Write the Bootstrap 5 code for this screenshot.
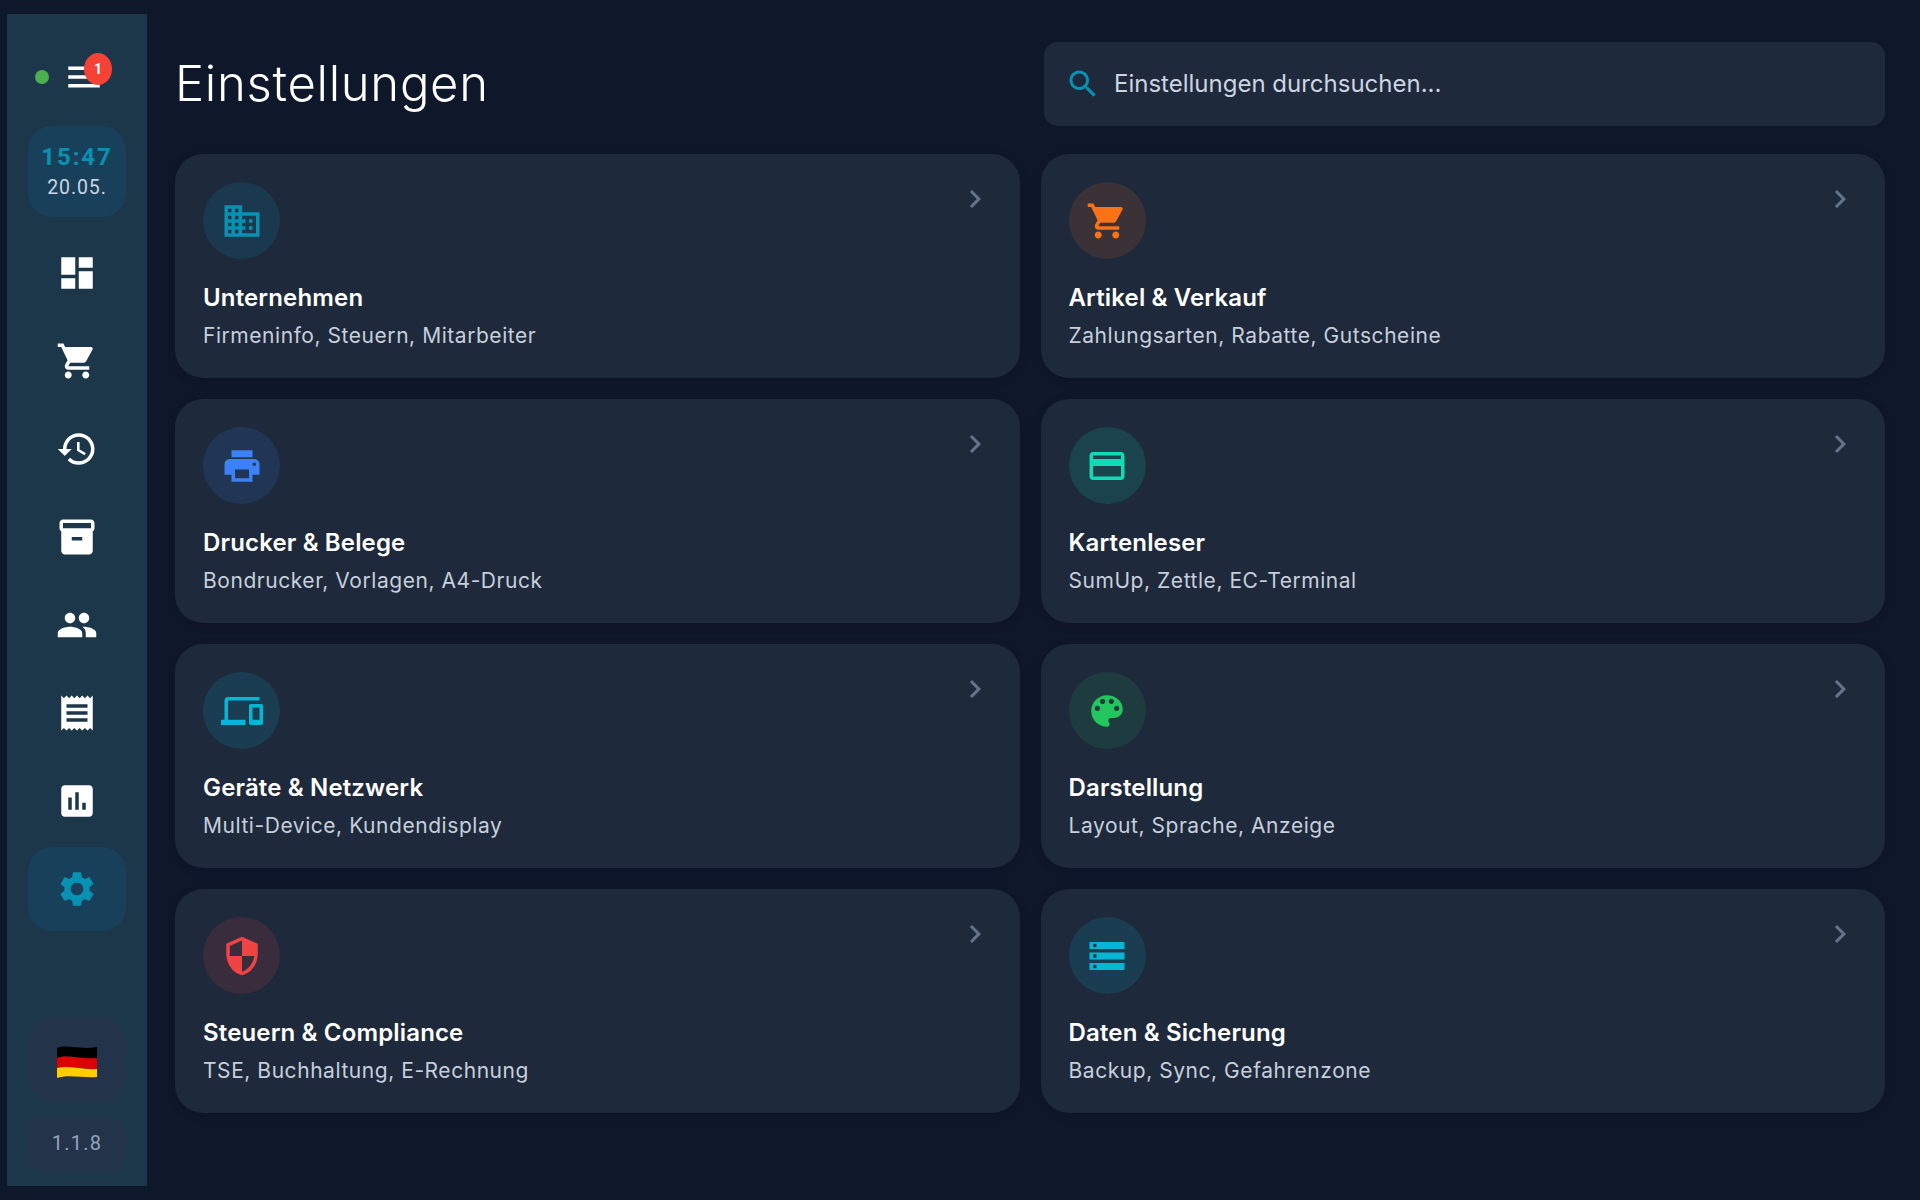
<!DOCTYPE html>
<html lang="de">
<head>
<meta charset="UTF-8">
<meta name="viewport" content="width=device-width, initial-scale=1.0">
<title>Einstellungen</title>
<link href="https://cdn.jsdelivr.net/npm/bootstrap@5.3.0/dist/css/bootstrap.min.css" rel="stylesheet">
<style>
    html, body { height: 100%; }
    body { background: #0f172a; color: #fff; font-family: Inter, "Noto Sans", sans-serif; overflow: hidden; }
    svg { fill: currentColor; display: block; flex-shrink: 0; }

    /* sidebar */
    .side-rail { width: 140px; margin: 14px 0 14px 7px; background: #1c364a; padding: 42px 21px 14px; }
    .side-top { height: 42px; margin-bottom: 28px; gap: 14px; padding-left: 7px; }
    .status-dot { width: 14px; height: 14px; background: #4caf50; }
    .menu-btn { width: 42px; height: 42px; }
    .menu-count { top: -3px; left: 21px; width: 28px; height: 32px; border-radius: 50%; background: #f44336; font: 700 14px/32px Roboto, sans-serif; text-align: center; }
    .clock-box { height: 91px; background: #19405a; border-radius: 24px; font-family: Roboto, sans-serif; margin-bottom: 14px; }
    .clock-time { color: #0891b2; font-size: 24px; font-weight: 700; letter-spacing: 1.9px; line-height: 30px; margin-top: -1px; }
    .clock-date { color: #cbd5e1; font-size: 19.5px; letter-spacing: .9px; line-height: 26px; margin-top: 3px; }
    .rail-item { height: 84px; margin-bottom: 4px; border-radius: 24px; color: #fff; }
    .rail-item.is-active { background: #19405a; color: #0891b2; }
    .flag-box { height: 84px; background: #23344a; border-radius: 24px; margin-bottom: 14px; padding-top: 4px; }
    .version-box { height: 56px; background: #23344a; border-radius: 18px; color: #94a3b8; font: 400 20px/1 Roboto, sans-serif; letter-spacing: 1.2px; padding-bottom: 2px; }

    /* main */
    .main-pane { padding: 42px 35px 0 28px; }
    .page-head { height: 84px; margin-bottom: 28px; }
    .page-title { font-size: 49px; font-weight: 300; letter-spacing: .7px; margin: 0; }
    .search-field { width: 841px; height: 84px; background: #1e293b; border-radius: 14px; padding-left: 21px; gap: 13px; color: #0891b2; }
    .search-text { color: #cbd5e1; font-size: 24px; }
    .settings-grid { display: grid; grid-template-columns: 1fr 1fr; grid-auto-rows: 224px; gap: 21px; }
    .setting-tile { background: #1e293b; border: 0; border-radius: 28px; padding: 28px 28px 0; box-shadow: 0 2px 8px rgba(0,0,0,.15); color: #fff; }
    .tile-chev { top: 27px; right: 27px; color: #64748b; }
    .tile-icon { width: 77px; height: 77px; margin-bottom: 21px; }
    .tile-title { font-size: 24px; font-weight: 600; letter-spacing: .15px; line-height: 36px; margin: 0; }
    .tile-sub { color: #c6cfdb; font-size: 21px; letter-spacing: .55px; line-height: 30px; margin-top: 5px; }

    .tone-cyan { color: #0891b2; background: rgba(8,145,178,.16); }
    .tone-orange { color: #f97316; background: rgba(249,115,22,.13); }
    .tone-blue { color: #3b82f6; background: rgba(59,130,246,.14); }
    .tone-teal { color: #10dbb4; background: rgba(16,219,180,.15); }
    .tone-sky { color: #06b6d4; background: rgba(6,182,212,.15); }
    .tone-green { color: #22c55e; background: rgba(34,197,94,.13); }
    .tone-red { color: #ef4444; background: rgba(239,68,68,.13); }
</style>
</head>
<body class="d-flex">

<!-- Sidebar -->
<aside class="side-rail d-flex flex-column flex-shrink-0">
    <div class="side-top d-flex align-items-center">
        <span class="status-dot rounded-circle"></span>
        <div class="menu-btn position-relative">
            <svg width="42" height="42" viewBox="0 0 24 24"><path d="M3 18h18v-2H3v2zm0-5h18v-2H3v2zm0-7v2h18V6H3z"/></svg>
            <span class="menu-count position-absolute">1</span>
        </div>
    </div>
    <div class="clock-box d-flex flex-column align-items-center justify-content-center">
        <div class="clock-time">15:47</div>
        <div class="clock-date">20.05.</div>
    </div>
    <div class="rail-item d-flex align-items-center justify-content-center"><svg width="42" height="42" viewBox="0 0 24 24"><path d="M3 13h8V3H3v10zm0 8h8v-6H3v6zm10 0h8V11h-8v10zm0-18v6h8V3h-8z"/></svg></div>
    <div class="rail-item d-flex align-items-center justify-content-center"><svg width="42" height="42" viewBox="0 0 24 24"><path d="M7 18c-1.1 0-1.99.9-1.99 2S5.9 22 7 22s2-.9 2-2-.9-2-2-2zM1 2v2h2l3.6 7.59-1.35 2.45c-.16.28-.25.61-.25.96 0 1.1.9 2 2 2h12v-2H7.42c-.14 0-.25-.11-.25-.25l.03-.12.9-1.63h7.45c.75 0 1.41-.41 1.75-1.03l3.58-6.49c.08-.14.12-.31.12-.48 0-.55-.45-1-1-1H5.21l-.94-2H1zm16 16c-1.1 0-1.99.9-1.99 2s.89 2 1.99 2 2-.9 2-2-.9-2-2-2z"/></svg></div>
    <div class="rail-item d-flex align-items-center justify-content-center"><svg width="42" height="42" viewBox="0 0 24 24"><path d="M13 3c-4.97 0-9 4.03-9 9H1l3.89 3.89.07.14L9 12H6c0-3.87 3.13-7 7-7s7 3.13 7 7-3.13 7-7 7c-1.93 0-3.68-.79-4.94-2.06l-1.42 1.42C8.27 19.99 10.51 21 13 21c4.97 0 9-4.03 9-9s-4.03-9-9-9zm-1 5v5l4.28 2.54.72-1.21-3.5-2.08V8H12z"/></svg></div>
    <div class="rail-item d-flex align-items-center justify-content-center"><svg width="42" height="42" viewBox="0 0 24 24"><path d="M20 2H4c-1 0-2 .9-2 2v3.01c0 .72.43 1.34 1 1.69V20c0 1.1 1.1 2 2 2h14c.9 0 2-.9 2-2V8.7c.57-.35 1-.97 1-1.69V4c0-1.1-1-2-2-2zm-5 12H9v-2h6v2zm5-7H4V4h16v3z"/></svg></div>
    <div class="rail-item d-flex align-items-center justify-content-center"><svg width="42" height="42" viewBox="0 0 24 24"><path d="M16 11c1.66 0 2.99-1.34 2.99-3S17.66 5 16 5c-1.66 0-3 1.34-3 3s1.34 3 3 3zm-8 0c1.66 0 2.99-1.34 2.99-3S9.66 5 8 5C6.34 5 5 6.34 5 8s1.34 3 3 3zm0 2c-2.33 0-7 1.17-7 3.5V19h14v-2.5c0-2.33-4.67-3.5-7-3.5zm8 0c-.29 0-.62.02-.97.05 1.16.84 1.97 1.97 1.97 3.45V19h6v-2.5c0-2.33-4.67-3.5-7-3.5z"/></svg></div>
    <div class="rail-item d-flex align-items-center justify-content-center"><svg width="42" height="42" viewBox="0 0 24 24"><path d="M18 17H6v-2h12v2zm0-4H6v-2h12v2zm0-4H6V7h12v2zM3 22l1.5-1.5L6 22l1.5-1.5L9 22l1.5-1.5L12 22l1.5-1.5L15 22l1.5-1.5L18 22l1.5-1.5L21 22V2l-1.5 1.5L18 2l-1.5 1.5L15 2l-1.5 1.5L12 2l-1.5 1.5L9 2 7.5 3.5 6 2 4.5 3.5 3 2v20z"/></svg></div>
    <div class="rail-item d-flex align-items-center justify-content-center"><svg width="42" height="42" viewBox="0 0 24 24"><path d="M19 3H5c-1.1 0-2 .9-2 2v14c0 1.1.9 2 2 2h14c1.1 0 2-.9 2-2V5c0-1.1-.9-2-2-2zM9 17H7v-7h2v7zm4 0h-2V7h2v10zm4 0h-2v-4h2v4z"/></svg></div>
    <div class="rail-item is-active d-flex align-items-center justify-content-center"><svg width="42" height="42" viewBox="0 0 24 24"><path d="M19.14 12.94c.04-.3.06-.61.06-.94 0-.32-.02-.64-.07-.94l2.03-1.58c.18-.14.23-.41.12-.61l-1.92-3.32c-.12-.22-.37-.29-.59-.22l-2.39.96c-.5-.38-1.03-.7-1.62-.94l-.36-2.54c-.04-.24-.24-.41-.48-.41h-3.84c-.24 0-.43.17-.47.41l-.36 2.54c-.59.24-1.13.57-1.62.94l-2.39-.96c-.22-.08-.47 0-.59.22L2.74 8.87c-.12.21-.08.47.12.61l2.03 1.58c-.05.3-.09.63-.09.94s.02.64.07.94l-2.03 1.58c-.18.14-.23.41-.12.61l1.92 3.32c.12.22.37.29.59.22l2.39-.96c.5.38 1.03.7 1.62.94l.36 2.54c.05.24.24.41.48.41h3.84c.24 0 .44-.17.47-.41l.36-2.54c.59-.24 1.13-.56 1.62-.94l2.39.96c.22.08.47 0 .59-.22l1.92-3.32c.12-.22.07-.47-.12-.61l-2.01-1.58zM12 15.6c-1.98 0-3.6-1.62-3.6-3.6s1.62-3.6 3.6-3.6 3.6 1.62 3.6 3.6-1.62 3.6-3.6 3.6z"/></svg></div>
    <div class="flag-box mt-auto d-flex align-items-center justify-content-center">
        <svg width="42" height="34" viewBox="0 0 42 34">
            <path fill="#000" d="M1 3C10-1 24 5 41 2v11C26 15 12 9 1 13z"/>
            <path fill="#dd0000" d="M1 13C12 9 26 15 41 13v11C26 25 12 20 1 23z"/>
            <path fill="#ffce00" d="M1 23C12 20 26 25 41 24v8C26 33 12 29 1 33z"/>
        </svg>
    </div>
    <div class="version-box d-flex align-items-center justify-content-center">1.1.8</div>
</aside>

<!-- Main -->
<main class="main-pane flex-grow-1">
    <div class="page-head d-flex align-items-center justify-content-between">
        <h1 class="page-title">Einstellungen</h1>
        <div class="search-field d-flex align-items-center">
            <svg width="36" height="36" viewBox="0 0 24 24"><path d="M15.5 14h-.79l-.28-.27C15.41 12.59 16 11.11 16 9.5 16 5.91 13.09 3 9.5 3S3 5.91 3 9.5 5.91 16 9.5 16c1.61 0 3.09-.59 4.23-1.57l.27.28v.79l5 4.99L20.49 19l-4.99-5zm-6 0C7.01 14 5 11.99 5 9.5S7.01 5 9.5 5 14 7.01 14 9.5 11.99 14 9.5 14z"/></svg>
            <span class="search-text">Einstellungen durchsuchen...</span>
        </div>
    </div>

    <div class="settings-grid">
        <div class="card setting-tile position-relative">
            <svg class="tile-chev position-absolute" width="36" height="36" viewBox="0 0 24 24"><path d="M10 6L8.59 7.41 13.17 12l-4.58 4.59L10 18l6-6z"/></svg>
            <div class="tile-icon tone-cyan rounded-circle d-flex align-items-center justify-content-center"><svg width="42" height="42" viewBox="0 0 24 24"><path d="M12 7V3H2v18h20V7H12zM6 19H4v-2h2v2zm0-4H4v-2h2v2zm0-4H4V9h2v2zm0-4H4V5h2v2zm4 12H8v-2h2v2zm0-4H8v-2h2v2zm0-4H8V9h2v2zm0-4H8V5h2v2zm10 12h-8v-2h2v-2h-2v-2h2v-2h-2V9h8v10zm-2-8h-2v2h2v-2zm0 4h-2v2h2v-2z"/></svg></div>
            <h2 class="tile-title">Unternehmen</h2>
            <div class="tile-sub">Firmeninfo, Steuern, Mitarbeiter</div>
        </div>
        <div class="card setting-tile position-relative">
            <svg class="tile-chev position-absolute" width="36" height="36" viewBox="0 0 24 24"><path d="M10 6L8.59 7.41 13.17 12l-4.58 4.59L10 18l6-6z"/></svg>
            <div class="tile-icon tone-orange rounded-circle d-flex align-items-center justify-content-center"><svg width="42" height="42" viewBox="0 0 24 24"><path d="M7 18c-1.1 0-1.99.9-1.99 2S5.9 22 7 22s2-.9 2-2-.9-2-2-2zM1 2v2h2l3.6 7.59-1.35 2.45c-.16.28-.25.61-.25.96 0 1.1.9 2 2 2h12v-2H7.42c-.14 0-.25-.11-.25-.25l.03-.12.9-1.63h7.45c.75 0 1.41-.41 1.75-1.03l3.58-6.49c.08-.14.12-.31.12-.48 0-.55-.45-1-1-1H5.21l-.94-2H1zm16 16c-1.1 0-1.99.9-1.99 2s.89 2 1.99 2 2-.9 2-2-.9-2-2-2z"/></svg></div>
            <h2 class="tile-title">Artikel &amp; Verkauf</h2>
            <div class="tile-sub">Zahlungsarten, Rabatte, Gutscheine</div>
        </div>
        <div class="card setting-tile position-relative">
            <svg class="tile-chev position-absolute" width="36" height="36" viewBox="0 0 24 24"><path d="M10 6L8.59 7.41 13.17 12l-4.58 4.59L10 18l6-6z"/></svg>
            <div class="tile-icon tone-blue rounded-circle d-flex align-items-center justify-content-center"><svg width="42" height="42" viewBox="0 0 24 24"><path d="M19 8H5c-1.66 0-3 1.34-3 3v6h4v4h12v-4h4v-6c0-1.66-1.34-3-3-3zm-3 11H8v-5h8v5zm3-7c-.55 0-1-.45-1-1s.45-1 1-1 1 .45 1 1-.45 1-1 1zm-1-9H6v4h12V3z"/></svg></div>
            <h2 class="tile-title">Drucker &amp; Belege</h2>
            <div class="tile-sub">Bondrucker, Vorlagen, A4-Druck</div>
        </div>
        <div class="card setting-tile position-relative">
            <svg class="tile-chev position-absolute" width="36" height="36" viewBox="0 0 24 24"><path d="M10 6L8.59 7.41 13.17 12l-4.58 4.59L10 18l6-6z"/></svg>
            <div class="tile-icon tone-teal rounded-circle d-flex align-items-center justify-content-center"><svg width="42" height="42" viewBox="0 0 24 24"><path d="M20 4H4c-1.11 0-1.99.89-1.99 2L2 18c0 1.11.89 2 2 2h16c1.11 0 2-.89 2-2V6c0-1.11-.89-2-2-2zm0 14H4v-6h16v6zm0-10H4V6h16v2z"/></svg></div>
            <h2 class="tile-title">Kartenleser</h2>
            <div class="tile-sub">SumUp, Zettle, EC-Terminal</div>
        </div>
        <div class="card setting-tile position-relative">
            <svg class="tile-chev position-absolute" width="36" height="36" viewBox="0 0 24 24"><path d="M10 6L8.59 7.41 13.17 12l-4.58 4.59L10 18l6-6z"/></svg>
            <div class="tile-icon tone-sky rounded-circle d-flex align-items-center justify-content-center"><svg width="42" height="42" viewBox="0 0 24 24"><path d="M4 6h18V4H4c-1.1 0-2 .9-2 2v11H0v3h14v-3H4V6zm19 2h-6c-.55 0-1 .45-1 1v10c0 .55.45 1 1 1h6c.55 0 1-.45 1-1V9c0-.55-.45-1-1-1zm-1 9h-4v-7h4v7z"/></svg></div>
            <h2 class="tile-title">Geräte &amp; Netzwerk</h2>
            <div class="tile-sub">Multi-Device, Kundendisplay</div>
        </div>
        <div class="card setting-tile position-relative">
            <svg class="tile-chev position-absolute" width="36" height="36" viewBox="0 0 24 24"><path d="M10 6L8.59 7.41 13.17 12l-4.58 4.59L10 18l6-6z"/></svg>
            <div class="tile-icon tone-green rounded-circle d-flex align-items-center justify-content-center"><svg width="42" height="42" viewBox="0 0 24 24"><path d="M12 3c-4.97 0-9 4.03-9 9s4.03 9 9 9c.83 0 1.5-.67 1.5-1.5 0-.39-.15-.74-.39-1.01-.24-.27-.39-.62-.39-1.01 0-.83.67-1.5 1.5-1.5H16c2.76 0 5-2.24 5-5 0-4.42-4.03-8-9-8zm-5.5 9c-.83 0-1.5-.67-1.5-1.5S5.67 9 6.5 9 8 9.67 8 10.5 7.33 12 6.5 12zm3-4C8.67 8 8 7.33 8 6.5S8.67 5 9.5 5s1.5.67 1.5 1.5S10.33 8 9.5 8zm5 0c-.83 0-1.5-.67-1.5-1.5S13.67 5 14.5 5s1.5.67 1.5 1.5S15.33 8 14.5 8zm3 4c-.83 0-1.5-.67-1.5-1.5S16.67 9 17.5 9s1.5.67 1.5 1.5-.67 1.5-1.5 1.5z"/></svg></div>
            <h2 class="tile-title">Darstellung</h2>
            <div class="tile-sub">Layout, Sprache, Anzeige</div>
        </div>
        <div class="card setting-tile position-relative">
            <svg class="tile-chev position-absolute" width="36" height="36" viewBox="0 0 24 24"><path d="M10 6L8.59 7.41 13.17 12l-4.58 4.59L10 18l6-6z"/></svg>
            <div class="tile-icon tone-red rounded-circle d-flex align-items-center justify-content-center"><svg width="42" height="42" viewBox="0 0 24 24"><path d="M12 1L3 5v6c0 5.55 3.84 10.74 9 12 5.16-1.26 9-6.45 9-12V5l-9-4zm0 10.99h7c-.53 4.12-3.28 7.79-7 8.94V12H5V6.3l7-3.11v8.8z"/></svg></div>
            <h2 class="tile-title">Steuern &amp; Compliance</h2>
            <div class="tile-sub">TSE, Buchhaltung, E-Rechnung</div>
        </div>
        <div class="card setting-tile position-relative">
            <svg class="tile-chev position-absolute" width="36" height="36" viewBox="0 0 24 24"><path d="M10 6L8.59 7.41 13.17 12l-4.58 4.59L10 18l6-6z"/></svg>
            <div class="tile-icon tone-sky rounded-circle d-flex align-items-center justify-content-center"><svg width="42" height="42" viewBox="0 0 24 24"><path d="M2 20h20v-4H2v4zm2-3h2v2H4v-2zM2 4v4h20V4H2zm4 3H4V5h2v2zm-4 7h20v-4H2v4zm2-3h2v2H4v-2z"/></svg></div>
            <h2 class="tile-title">Daten &amp; Sicherung</h2>
            <div class="tile-sub">Backup, Sync, Gefahrenzone</div>
        </div>
    </div>
</main>

<script src="https://cdn.jsdelivr.net/npm/bootstrap@5.3.0/dist/js/bootstrap.bundle.min.js"></script>
</body>
</html>
